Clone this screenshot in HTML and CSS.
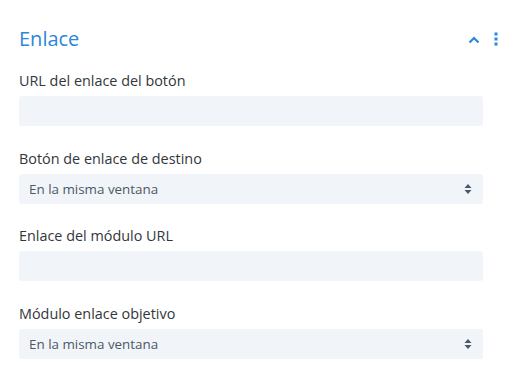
FILE: index.html
```html
<!DOCTYPE html>
<html lang="es">
	<head>
		<meta charset="UTF-8" />
		<meta name="viewport" content="width=device-width, initial-scale=1.0" />
		<title>Enlace</title>
		<link rel="stylesheet" href="styles.css">
	</head>
	<body>
		<section class="panel">
			<header class="panel-head">
				<h2 class="panel-title">Enlace</h2>
				<div class="panel-actions">
					<svg class="icon-chevron" width="12" height="8" viewBox="0 0 12 8">
						<path d="M1.5 6.5 L6 2 L10.5 6.5" fill="none" stroke="#2b87da" stroke-width="2.2" />
					</svg>
					<svg class="icon-dots" width="4" height="14" viewBox="0 0 4 14">
						<rect x="0.5" y="0.5" width="3" height="3" fill="#2b87da" />
						<rect x="0.5" y="5.5" width="3" height="3" fill="#2b87da" />
						<rect x="0.5" y="10.5" width="3" height="3" fill="#2b87da" />
					</svg>
				</div>
			</header>

			<div class="field">
				<label class="field-label">URL del enlace del botón</label>
				<div class="input"></div>
			</div>

			<div class="field">
				<label class="field-label">Botón de enlace de destino</label>
				<div class="input select">
					<span>En la misma ventana</span>
					<svg class="arrows" width="8" height="12" viewBox="0 0 8 12">
						<path d="M4 1 L7.5 5 L0.5 5 Z" fill="#4c5866" />
						<path d="M4 11 L7.5 7 L0.5 7 Z" fill="#4c5866" />
					</svg>
				</div>
			</div>

			<div class="field">
				<label class="field-label">Enlace del módulo URL</label>
				<div class="input"></div>
			</div>

			<div class="field">
				<label class="field-label">Módulo enlace objetivo</label>
				<div class="input select">
					<span>En la misma ventana</span>
					<svg class="arrows" width="8" height="12" viewBox="0 0 8 12">
						<path d="M4 1 L7.5 5 L0.5 5 Z" fill="#4c5866" />
						<path d="M4 11 L7.5 7 L0.5 7 Z" fill="#4c5866" />
					</svg>
				</div>
			</div>
		</section>
	</body>
</html>
```

FILE: styles.css
```css
*,
::before,
::after {
	box-sizing: border-box;
}
body {
	margin: 0;
	background-color: #fff;
	font-family: "Open Sans", "Noto Sans", sans-serif;
	color: #4c5866;
}
.panel {
	padding: 24px 29px 0 19px;
}
.panel-head {
	display: flex;
	align-items: center;
	justify-content: space-between;
	height: 28px;
}
.panel-title {
	margin: 0;
	font-size: 20px;
	font-weight: 400;
	color: #2b87da;
}
.panel-actions {
	display: flex;
	align-items: center;
	gap: 14px;
	margin-right: -15px;
}
.icon-chevron {
	display: block;
	margin-top: 3px;
}
.icon-dots {
	display: block;
	margin-top: 1px;
}
.field {
	margin-top: 19px;
}
.field + .field {
	margin-top: 22.5px;
}
.field-label {
	display: block;
	font-size: 14.4px;
	line-height: 20px;
	font-weight: 500;
	color: #32373c;
	margin-bottom: 5px;
}
.input {
	height: 30px;
	background-color: #f1f5f9;
	border-radius: 3px;
}
.select {
	display: flex;
	align-items: center;
	justify-content: space-between;
	padding: 0 11px 0 10px;
	font-size: 13.4px;
	font-weight: 500;
	color: #4c5866;
}
.arrows {
	display: block;
}
```
